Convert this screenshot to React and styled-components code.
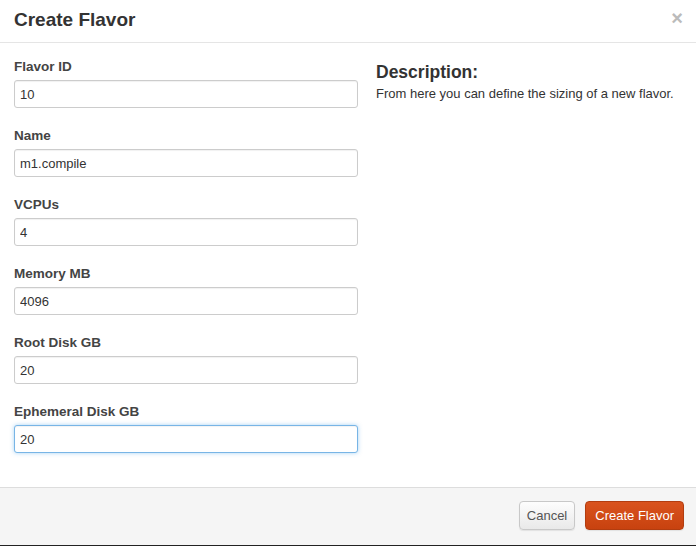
import React from 'react'
import styled, { createGlobalStyle } from 'styled-components'

const Global = createGlobalStyle`
    html, body {
        margin: 0;
        padding: 0;
        background: #fff;
    }
    body {
        font-family: "Liberation Sans", Arial, sans-serif;
        color: #333;
    }
`

const Modal = styled.div`
    width: 696px;
    height: 546px;
    display: flex;
    flex-direction: column;
    box-sizing: border-box;
    border-bottom: 1px solid #222;
    background: #fff;
`

const Header = styled.div`
    height: 43px;
    box-sizing: border-box;
    border-bottom: 1px solid #e5e5e5;
    display: flex;
    align-items: center;
    justify-content: space-between;
    padding: 0 14px;
`

const Title = styled.h3`
    margin: 0;
    font-size: 19px;
    font-weight: bold;
    color: #333;
    line-height: 1;
    padding-bottom: 4px;
`

const Close = styled.span`
    font-size: 20px;
    font-weight: bold;
    color: #bbb;
    line-height: 1;
    margin-right: -1px;
    padding-bottom: 6px;
`

const Body = styled.div`
    flex: 1;
    display: grid;
    grid-template-columns: 344px 1fr;
    column-gap: 18px;
    padding: 16px 14px 0 14px;
`

const Form = styled.div`
    display: flex;
    flex-direction: column;
`

const Group = styled.div`
    display: flex;
    flex-direction: column;
    margin-bottom: 20px;
`

const Label = styled.label`
    font-size: 13.5px;
    font-weight: bold;
    color: #444;
    line-height: 16px;
    margin-bottom: 5px;
`

const Input = styled.input`
    box-sizing: border-box;
    width: 344px;
    height: 28px;
    padding: 0 5px;
    font-family: "Liberation Sans", Arial, sans-serif;
    font-size: 13px;
    color: #333;
    border: 1px solid ${p => p.$focused ? '#78b5e6' : '#ccc'};
    border-radius: 3px;
    box-shadow: ${p => p.$focused
        ? 'inset 0 1px 1px rgba(0,0,0,0.05), 0 0 4px rgba(82,168,236,0.5)'
        : 'inset 0 1px 1px rgba(0,0,0,0.06)'};
    outline: none;
`

const Side = styled.div`
    padding-top: 2px;
`

const SideTitle = styled.h3`
    margin: 0 0 3px 0;
    font-size: 17.5px;
    font-weight: bold;
    color: #333;
    line-height: 22px;
`

const SideText = styled.p`
    margin: 0;
    font-size: 13px;
    line-height: 16px;
    color: #333;
`

const Footer = styled.div`
    height: 58px;
    box-sizing: border-box;
    border-top: 1px solid #ddd;
    background: #f5f5f5;
    display: flex;
    align-items: center;
    justify-content: flex-end;
    gap: 10px;
    padding: 0 12px 3px 0;
`

const Button = styled.button`
    height: 29px;
    box-sizing: border-box;
    padding: ${p => p.$primary ? '0 9px' : '1px 7px 0'};
    white-space: nowrap;
    font-family: "Liberation Sans", Arial, sans-serif;
    font-size: 13px;
    border-radius: 4px;
    cursor: pointer;
    color: ${p => p.$primary ? '#fff' : '#555'};
    background: ${p => p.$primary
        ? 'linear-gradient(#d9531e, #c8420f)'
        : 'linear-gradient(#fdfdfd, #e9e9e9)'};
    border: 1px solid ${p => p.$primary ? '#b23d10' : '#c8c8c8'};
    box-shadow: 0 1px 1px rgba(0,0,0,0.08);
`

const fields = [
    ['Flavor ID', '10'],
    ['Name', 'm1.compile'],
    ['VCPUs', '4'],
    ['Memory MB', '4096'],
    ['Root Disk GB', '20'],
    ['Ephemeral Disk GB', '20'],
]

export default function App() {
    return (
        <>
            <Global />
            <Modal>
                <Header>
                    <Title>Create Flavor</Title>
                    <Close>×</Close>
                </Header>
                <Body>
                    <Form>
                        {fields.map(([label, value], i) => (
                            <Group key={label}>
                                <Label>{label}</Label>
                                <Input defaultValue={value} $focused={i === fields.length - 1} />
                            </Group>
                        ))}
                    </Form>
                    <Side>
                        <SideTitle>Description:</SideTitle>
                        <SideText>From here you can define the sizing of a new flavor.</SideText>
                    </Side>
                </Body>
                <Footer>
                    <Button>Cancel</Button>
                    <Button $primary>Create Flavor</Button>
                </Footer>
            </Modal>
        </>
    )
}
